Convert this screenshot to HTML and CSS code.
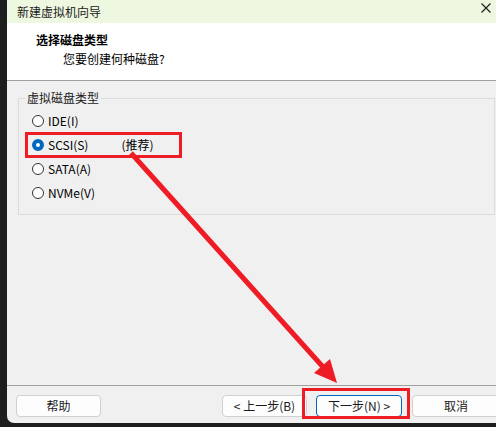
FILE: index.html
```html
<!DOCTYPE html>
<html lang="zh-CN">
<head>
<meta charset="utf-8">
<title>新建虚拟机向导</title>
<link rel="stylesheet" href="styles.css">
</head>
<body>
<div class="screen">
  <div class="window">
    <div class="titlebar">
      <span class="title">新建虚拟机向导</span>
      <svg class="close" width="10" height="10" viewBox="0 0 10 10"><path d="M0.5 0.5 L9.5 9.5 M9.5 0.5 L0.5 9.5" stroke="#1a1a1a" stroke-width="1.1" fill="none"/></svg>
    </div>
    <div class="header">
      <div class="h-title">选择磁盘类型</div>
      <div class="h-sub">您要创建何种磁盘?</div>
    </div>
    <div class="content">
      <fieldset class="group">
        <legend class="legend">虚拟磁盘类型</legend>
        <div class="row"><span class="radio"></span><span class="label">IDE(I)</span></div>
        <div class="row"><span class="radio checked"></span><span class="label">SCSI(S)</span><span class="rec">(推荐)</span></div>
        <div class="row"><span class="radio"></span><span class="label">SATA(A)</span></div>
        <div class="row"><span class="radio"></span><span class="label">NVMe(V)</span></div>
      </fieldset>
    </div>
    <div class="footer">
      <button class="btn help">帮助</button>
      <button class="btn back">&lt; 上一步(B)</button>
      <button class="btn next">下一步(N) &gt;</button>
      <button class="btn cancel">取消</button>
    </div>
  </div>
  <svg class="overlay" width="496" height="427" viewBox="0 0 496 427">
    <rect x="26.5" y="133.5" width="154" height="23" fill="none" stroke="#ee1c25" stroke-width="3"/>
    <rect x="303.5" y="389.5" width="105" height="28" fill="none" stroke="#ee1c25" stroke-width="3"/>
    <line x1="131" y1="153" x2="323" y2="367" stroke="#ee1c25" stroke-width="5"/>
    <polygon points="337,383 314,373 330,359" fill="#ee1c25"/>
  </svg>
</div>
</body>
</html>
```
FILE: styles.css
```css
* { box-sizing: border-box; }
html, body {
  margin: 0;
  padding: 0;
  background: #1d1e20;
}
body {
  width: 496px;
  height: 427px;
  overflow: hidden;
  font-family: "Noto Sans CJK SC", "Noto Sans", sans-serif;
  font-size: 12px;
  color: #000;
}
.screen {
  position: relative;
  width: 496px;
  height: 427px;
  padding-left: 7px;
}
.window {
  width: 500px;
  height: 423px;
  background: #f0f0f0;
  border-bottom-left-radius: 7px;
  display: flex;
  flex-direction: column;
  overflow: hidden;
}
.titlebar {
  height: 23px;
  flex: none;
  background: #eef7e0;
  display: flex;
  align-items: center;
  padding-left: 10px;
  padding-right: 16px;
}
.title {
  flex: 1;
  font-size: 12px;
  line-height: 14px;
  color: #1a1a1a;
}
.close { display: block; margin-top: -7px; }
.header {
  height: 58px;
  flex: none;
  background: #fff;
  border-bottom: 1px solid #a0a0a0;
  padding-top: 8px;
  padding-left: 29px;
}
.h-title {
  font-weight: bold;
  font-size: 12px;
  line-height: 17px;
}
.h-sub {
  padding-left: 27px;
  line-height: 17px;
  margin-top: 2px;
}
.content {
  flex: 1;
  padding: 10px 0 0 11px;
}
.group {
  margin: 0;
  width: 477px;
  border: 1px solid #dcdcdc;
  padding: 4px 0 9px 0;
}
.legend {
  padding: 0 2px;
  margin-left: 6px;
  line-height: 14px;
  color: #1a1a1a;
}
.row {
  display: flex;
  align-items: center;
  height: 24px;
  padding-left: 13px;
}
.radio {
  width: 12px;
  height: 12px;
  border-radius: 50%;
  border: 1px solid #333;
  background: #fff;
  margin-right: 4px;
  flex: none;
}
.radio.checked {
  border: 4px solid #0067c0;
  background: #fff;
}
.label { line-height: 16px; }
.rec { margin-left: 33px; line-height: 16px; }
.footer {
  height: 38px;
  flex: none;
  border-top: 1px solid #a0a0a0;
  display: flex;
  align-items: flex-start;
  padding-top: 9px;
  padding-left: 9px;
}
.btn {
  font-family: "Noto Sans CJK SC", "Noto Sans", sans-serif;
  font-size: 12px;
  height: 22px;
  width: 86px;
  flex: none;
  padding: 0;
  background: #fdfdfd;
  border: 1px solid #d0d0d0;
  border-radius: 4px;
  color: #1a1a1a;
  line-height: 18px;
}
.help { width: 85px; }
.back { width: 85px; margin-left: 121px; margin-right: 9px; }
.next { border-color: #0067c0; margin-right: 10px; }
.cancel { width: 88px; }
.overlay {
  position: absolute;
  left: 0;
  top: 0;
  pointer-events: none;
}
```
